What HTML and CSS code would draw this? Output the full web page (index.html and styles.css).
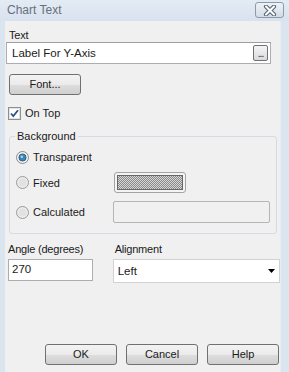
FILE: index.html
```html
<!DOCTYPE html>
<html lang="en">
<head>
    <meta charset="UTF-8">
    <title>Chart Text</title>
    <link rel="stylesheet" href="styles.css">
</head>
<body>
    <div class="window">
        <div class="titlebar">
            <span class="title">Chart Text</span>
            <div class="close-btn">
                <svg width="16" height="11" viewBox="0 0 16 11">
                    <path d="M4 1.5 L12 9.5 M12 1.5 L4 9.5" stroke="#5a6776" stroke-width="4.2" stroke-linecap="round"/>
                    <path d="M4 1.5 L12 9.5 M12 1.5 L4 9.5" stroke="#fff" stroke-width="2" stroke-linecap="round"/>
                </svg>
            </div>
        </div>

        <div class="content">
            <div class="lbl lbl-text">Text</div>
            <div class="textbox">
                <span>Label For Y-Axis</span>
                <div class="dots-btn">...</div>
            </div>

            <div class="btn font-btn">Font...</div>

            <div class="check-row">
                <svg class="checkbox" width="13" height="13" viewBox="0 0 13 13">
                    <rect x="0.5" y="0.5" width="12" height="12" fill="#f4f4f4" stroke="#8e8f8f"/>
                    <rect x="1.5" y="1.5" width="10" height="10" fill="#fff" stroke="#e2e2e2"/>
                    <path d="M3 6.5 L5.3 9 L10 3.2" fill="none" stroke="#33508a" stroke-width="1.8"/>
                </svg>
                <span>On Top</span>
            </div>

            <fieldset class="group">
                <legend>Background</legend>
                <div class="radio-row row1">
                    <div class="radio-label">
                        <svg width="13" height="13" viewBox="0 0 13 13">
                            <circle cx="6.5" cy="6.5" r="6" fill="#f2f2f2" stroke="#8b8b8b"/>
                            <circle cx="6.5" cy="6.5" r="3.6" fill="#3a87b8" stroke="#24506e" stroke-width="0.8"/>
                            <circle cx="5.8" cy="5.8" r="1.3" fill="#9fd4f0"/>
                        </svg>
                        <span>Transparent</span>
                    </div>
                </div>
                <div class="radio-row row2">
                    <div class="radio-label">
                        <svg width="13" height="13" viewBox="0 0 13 13">
                            <circle cx="6.5" cy="6.5" r="6" fill="#ececec" stroke="#999"/>
                            <circle cx="6.5" cy="6.5" r="4" fill="#e2e2e2"/>
                        </svg>
                        <span>Fixed</span>
                    </div>
                    <div class="swatch"><div class="swatch-fill"></div></div>
                </div>
                <div class="radio-row row3">
                    <div class="radio-label">
                        <svg width="13" height="13" viewBox="0 0 13 13">
                            <circle cx="6.5" cy="6.5" r="6" fill="#ececec" stroke="#999"/>
                            <circle cx="6.5" cy="6.5" r="4" fill="#e2e2e2"/>
                        </svg>
                        <span>Calculated</span>
                    </div>
                    <div class="calc-box"></div>
                </div>
            </fieldset>

            <div class="bottom-row">
                <div class="col-angle">
                    <div class="lbl">Angle (degrees)</div>
                    <div class="angle-input">270</div>
                </div>
                <div class="col-align">
                    <div class="lbl lbl-align">Alignment</div>
                    <div class="select">
                        <span>Left</span>
                        <svg width="7" height="4" viewBox="0 0 7 4"><path d="M0 0 L7 0 L3.5 4 Z" fill="#000"/></svg>
                    </div>
                </div>
            </div>

            <div class="actions">
                <div class="btn">OK</div>
                <div class="btn">Cancel</div>
                <div class="btn">Help</div>
            </div>
        </div>
    </div>
</body>
</html>
```

FILE: styles.css
```css
body { margin: 0; font-family: "Liberation Sans", Arial, sans-serif; font-size: 11px; color: #1a1a1a; }
.window { width: 289px; height: 372px; background: #dbe5f0; display: flex; flex-direction: column; overflow: hidden; }
.titlebar { height: 21px; display: flex; justify-content: space-between; align-items: flex-start; padding: 0 5px 0 7px; background: linear-gradient(#e3ebf4, #d8e2ee); }
.title { font-size: 12px; color: #66707b; line-height: 20px; }
.close-btn { margin-top: 2px; width: 27px; height: 14px; border: 1px solid #8c9aab; border-radius: 3px; background: linear-gradient(#eef2f7, #d3dce7); display: flex; justify-content: center; align-items: center; }
.content { flex: 1; margin: 0 8px 0 5px; background: #f0f0f0; padding-top: 8px; display: flex; flex-direction: column; border-right: 1px solid #e6ecf3; }
.lbl { height: 13px; line-height: 13px; letter-spacing: -0.2px; }
.lbl-text { margin-left: 4px; }
.textbox { height: 22px; box-sizing: border-box; margin: 0 9px 0 1px; border: 1px solid #abadb3; border-top-color: #9c9ea5; background: #fff; display: flex; justify-content: space-between; align-items: center; padding: 0 2px 0 5px; font-size: 11.5px; }
.dots-btn { width: 15px; height: 16px; box-sizing: border-box; border: 1px solid #707070; border-radius: 2px; background: linear-gradient(#f4f4f4, #dadada); font-size: 10px; line-height: 16px; text-align: center; letter-spacing: -1px; }
.btn { width: 72px; height: 21px; box-sizing: border-box; border: 1px solid #707070; border-radius: 3px; background: linear-gradient(#f3f3f3 0%, #ebebeb 50%, #dddddd 51%, #cfcfcf 100%); text-align: center; line-height: 19px; }
.font-btn { margin: 10px 0 0 4px; }
.check-row { margin: 11px 0 0 3px; display: flex; align-items: center; gap: 4px; height: 14px; }
.checkbox { display: block; }
.group { margin: 10px 3px 0 4px; padding: 0 0 10px 5px; border: 1px solid #d5dbe2; border-radius: 3px; }
.group legend { padding: 0 2px; height: 13px; line-height: 13px; }
.radio-row { display: grid; grid-template-columns: 97px 1fr; align-items: center; padding-left: 1px; }
.row1 { height: 20px; margin-top: 4px; }
.row2 { height: 21px; margin-top: 5px; }
.row3 { height: 22px; margin-top: 8px; }
.radio-label { display: flex; align-items: center; gap: 4px; }
.radio-label svg { display: block; }
.swatch { margin-left: 1px; width: 72px; height: 21px; box-sizing: border-box; border: 1px solid #a3a3a3; border-radius: 3px; padding: 2px; background: #f4f4f4; }
.swatch-fill { height: 100%; box-sizing: border-box; border: 1px solid #666; background: repeating-conic-gradient(#8a8a8a 0 25%, #d6d6d6 0 50%) 0 0 / 2px 2px; }
.calc-box { height: 22px; box-sizing: border-box; margin-right: 6px; border: 1px solid #b5b5b5; border-radius: 2px; background: #f0f0f0; }
.bottom-row { display: flex; gap: 20px; margin: 9px 0 0 3px; }
.col-angle { width: 85px; }
.angle-input { margin-top: 3px; height: 22px; box-sizing: border-box; border: 1px solid #abadb3; background: #fff; padding-left: 3px; line-height: 19px; font-size: 11.5px; }
.col-align { width: 168px; }
.lbl-align { padding-left: 2px; }
.select { margin-top: 3px; height: 24px; box-sizing: border-box; border: 1px solid #d2d2d2; background: #fff; display: flex; justify-content: space-between; align-items: center; padding: 0 4px 0 4px; font-size: 11.5px; }
.select svg { display: block; }
.actions { margin-top: auto; margin-bottom: 7px; display: flex; gap: 9px; padding-left: 40px; }
```
